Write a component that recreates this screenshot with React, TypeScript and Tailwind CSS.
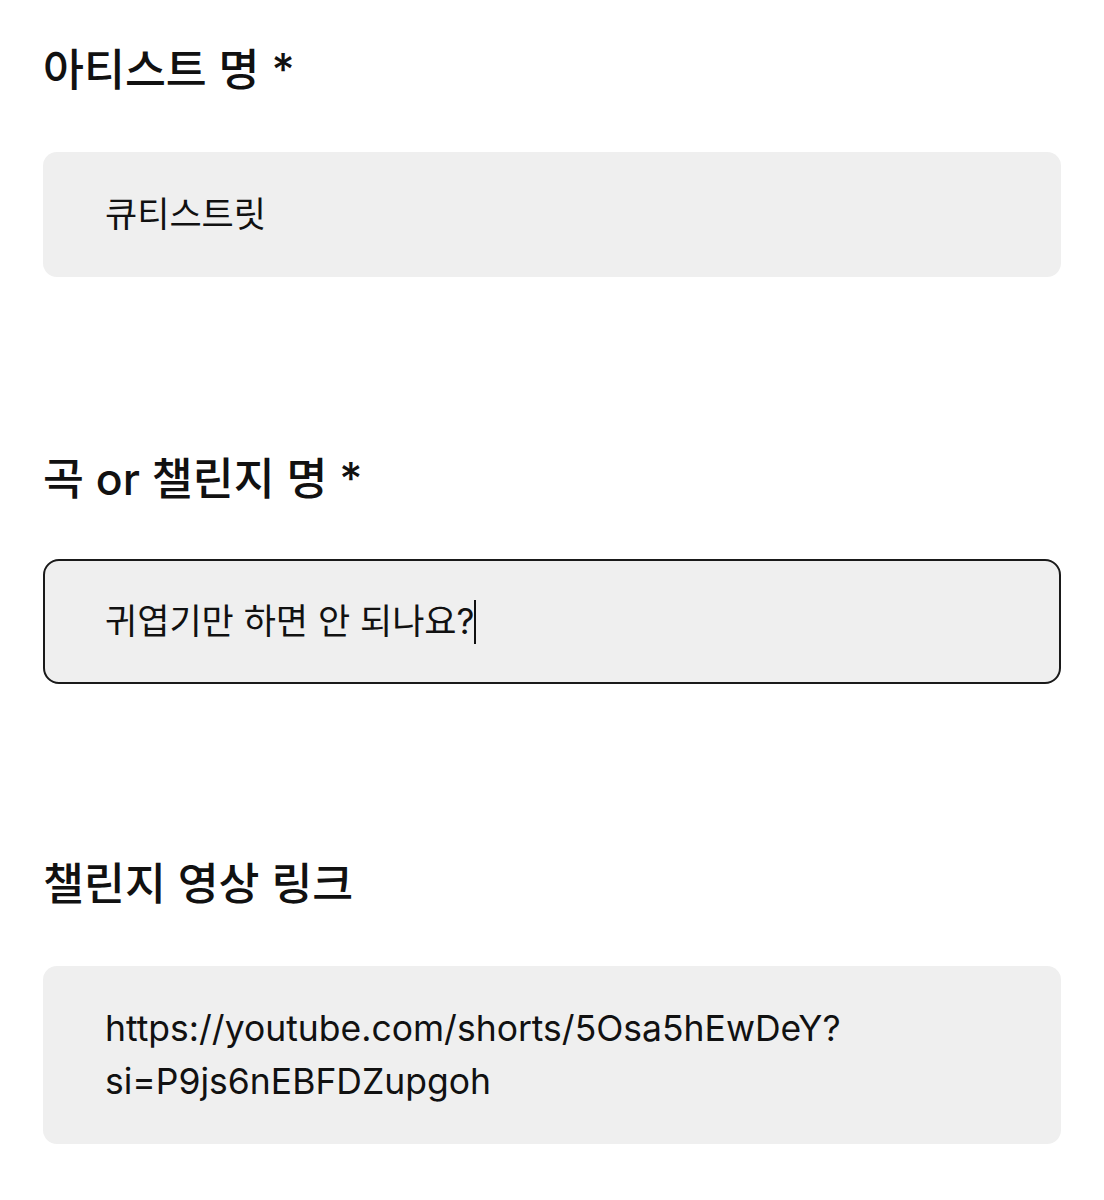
import React from "react";

const font = { fontFamily: "Inter, 'Noto Sans CJK KR', sans-serif" };

function Label({ children }: { children: React.ReactNode }) {
  return (
    <div className="text-[44.5px] font-medium leading-[60px] text-[#111111]">
      {children}
    </div>
  );
}

export default function App() {
  return (
    <div
      className="bg-white w-[1104px] min-h-[1200px] px-[43px] pt-[40px] pb-[40px]"
      style={font}
    >
      <Label>아티스트 명 *</Label>
      <div className="mt-[52px] rounded-[14px] bg-[#efefef] pl-[62px] pr-[40px] py-[36px] text-[35px] leading-[53px] text-[#111111]">
        큐티스트릿
      </div>

      <div className="mt-[172px]">
        <Label>곡 or 챌린지 명 *</Label>
      </div>
      <div className="mt-[50px] rounded-[16px] bg-[#efefef] border-2 border-[#1a1a1a] pl-[60px] pr-[40px] py-[34px] text-[35px] leading-[53px] text-[#111111] flex items-center">
        <span>귀엽기만 하면 안 되나요?</span>
        <span className="inline-block w-[2px] h-[44px] bg-[#111111]" />
      </div>

      <div className="mt-[170px]">
        <Label>챌린지 영상 링크</Label>
      </div>
      <div className="mt-[52px] rounded-[14px] bg-[#efefef] pl-[62px] pr-[40px] py-[36px] text-[35.5px] leading-[53px] text-[#111111]">
        <div>https://youtube.com/shorts/5Osa5hEwDeY?</div>
        <div>si=P9js6nEBFDZupgoh</div>
      </div>
    </div>
  );
}
